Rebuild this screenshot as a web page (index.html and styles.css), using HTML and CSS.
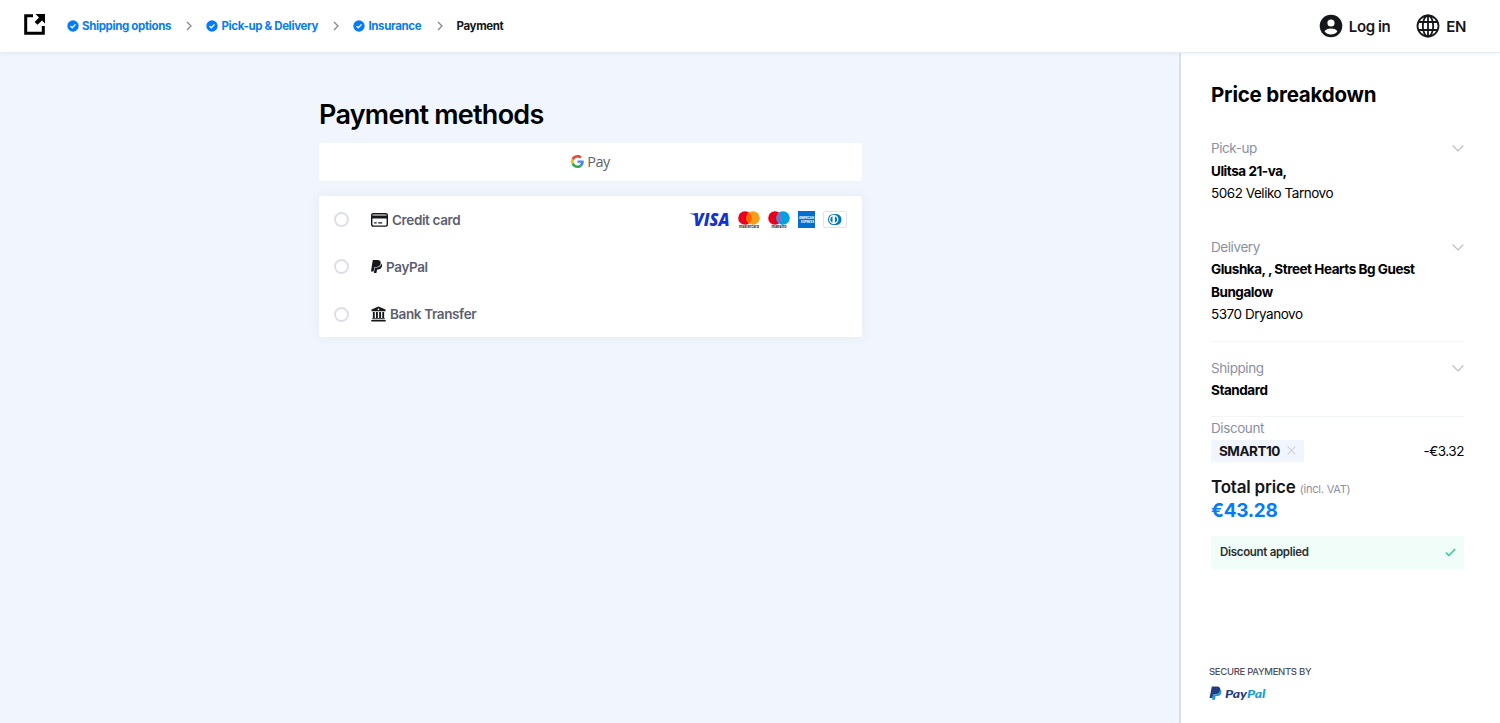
FILE: index.html
```html
<!DOCTYPE html>
<html lang="en">

<head>
    <meta charset="UTF-8" />
    <meta name="viewport" content="width=device-width, initial-scale=1.0" />
    <title>Payment</title>
    <link rel="stylesheet" href="styles.css">
</head>

<body>
    <!-- shared icons -->
    <svg class="sprite" width="0" height="0">
        <symbol id="done" viewBox="0 0 12 12">
            <circle cx="6" cy="6" r="5.7" fill="#057cf6" />
            <path d="M3.5 6.1l1.8 1.7 3.2-3.4" fill="none" stroke="#fff" stroke-width="1.3" />
        </symbol>
        <symbol id="next" viewBox="0 0 6 10">
            <path d="M1 1l4 4-4 4" fill="none" stroke="#858994" stroke-width="1.3" />
        </symbol>
        <symbol id="down" viewBox="0 0 12 8">
            <path d="M.7 1.500L6 7 11.300 1.500" fill="none" stroke="#b9bcc8" stroke-width="1.1" />
        </symbol>
        <symbol id="pp" viewBox="0 0 384 512">
            <path d="M111.400 295.900c-3.500 19.200-17.400 108.700-21.500 134-.3 1.800-1 2.500-3 2.500H12.300c-7.600 0-13.100-6.600-12.100-13.900L58.800 46.600c1.500-9.600 10.100-16.900 20-16.900 152.300 0 165.100-3.700 204 11.400 60.100 23.300 65.600 79.500 44 140.300-21.500 62.600-72.500 89.500-140.100 90.300-43.400.7-69.500-7-75.300 24.200zM357.100 152c-1.800-1.300-2.500-1.800-3 1.300-2 11.400-5.100 22.500-8.800 33.600-39.900 113.800-150.500 103.900-204.500 103.900-6.100 0-10.100 3.300-10.900 9.400-22.600 140.400-27.100 169.700-27.100 169.700-1 7.100 3.500 12.900 10.600 12.900h63.500c8.600 0 15.700-6.300 17.400-14.900.7-5.400-1.100 6.100 14.400-91.300 4.600-22 14.300-19.700 29.300-19.700 71 0 126.400-28.800 142.900-112.300 6.500-34.800 4.600-71.400-23.800-92.600z" />
        </symbol>
    </svg>

    <header class="header">
        <svg class="logo" width="22" height="21" viewBox="0 0 22 21">
            <path d="M9 1.700H1.700v17.600h17.600V12" fill="none" stroke="#000" stroke-width="3" />
            <path d="M11.500 0H21v9.500l-3-3-4.500 4.300-2.900-2.900L15 3.500z" fill="#000" />
        </svg>
        <nav class="steps">
            <svg class="done" width="12" height="12"><use href="#done" /></svg>
            <a class="step">Shipping options</a>
            <svg class="next" width="6" height="10"><use href="#next" /></svg>
            <svg class="done" width="12" height="12"><use href="#done" /></svg>
            <a class="step">Pick-up &amp; Delivery</a>
            <svg class="next" width="6" height="10"><use href="#next" /></svg>
            <svg class="done" width="12" height="12"><use href="#done" /></svg>
            <a class="step">Insurance</a>
            <svg class="next" width="6" height="10"><use href="#next" /></svg>
            <a class="step active">Payment</a>
        </nav>
        <div class="user">
            <svg width="24" height="24" viewBox="0 0 24 24">
                <circle cx="12" cy="12" r="11.300" fill="#15171a" />
                <circle cx="12" cy="9" r="3.600" fill="#fff" />
                <path d="M5.600 17.600c1-2.200 3.500-3 6.400-3s5.400.8 6.400 3c-1.500 1.800-3.700 2.900-6.400 2.900s-4.900-1.100-6.400-2.900z" fill="#fff" />
            </svg>
            <span>Log in</span>
        </div>
        <div class="lang">
            <svg width="24" height="24" viewBox="0 0 24 24" fill="none" stroke="#15171a" stroke-width="1.800">
                <circle cx="12" cy="12" r="10.500" />
                <ellipse cx="12" cy="12" rx="5.200" ry="10.500" />
                <path d="M12 1.500v21M2.400 8h19.200M2.400 16h19.200" />
            </svg>
            <span>EN</span>
        </div>
    </header>

    <div class="page">
        <main class="main">
            <h1>Payment methods</h1>
            <button class="gpay">
                <svg width="13" height="13" viewBox="0 0 48 48">
                    <path fill="#ea4335" d="M24 9.500c3.540 0 6.710 1.220 9.210 3.600l6.850-6.850C35.900 2.380 30.470 0 24 0 14.620 0 6.510 5.380 2.560 13.220l7.980 6.190C12.430 13.720 17.740 9.500 24 9.500z" />
                    <path fill="#4285f4" d="M46.980 24.550c0-1.570-.15-3.090-.38-4.550H24v9.020h12.940c-.58 2.960-2.260 5.480-4.780 7.180l7.730 6c4.510-4.180 7.090-10.360 7.090-17.650z" />
                    <path fill="#fbbc05" d="M10.530 28.590c-.48-1.450-.76-2.990-.76-4.590s.27-3.140.76-4.590l-7.980-6.190C.92 16.460 0 20.120 0 24s.92 7.540 2.560 10.780z" />
                    <path fill="#34a853" d="M24 48c6.480 0 11.930-2.130 15.890-5.810l-7.730-6c-2.150 1.450-4.920 2.300-8.160 2.300-6.260 0-11.570-4.220-13.470-9.910l-7.980 6.190C6.510 42.620 14.620 48 24 48z" />
                </svg>
                <span>Pay</span>
            </button>

            <div class="methods">
                <label class="method">
                    <input type="radio" name="method" />
                    <svg width="17" height="14" viewBox="0 0 17 14">
                        <rect x=".7" y=".7" width="15.600" height="12.400" rx="1.500" fill="none" stroke="#15171a" stroke-width="1.400" />
                        <path d="M1 2.500h15v3H1z" fill="#15171a" />
                        <path d="M3.200 9.800h2.500M7.200 9.800h4" stroke="#15171a" stroke-width="1.200" />
                    </svg>
                    <span>Credit card</span>
                    <div class="cards">
                        <svg width="41" height="18" viewBox="0 0 41 18">
                            <path d="M.5 2.500h6l2.500 4.500C7 4.700 4 3.300.5 2.700z" fill="#1434cb" />
                            <text class="visa" x="4.500" y="15" textLength="36" lengthAdjust="spacingAndGlyphs">VISA</text>
                        </svg>
                        <svg width="22" height="18" viewBox="0 0 22 18">
                            <circle cx="7" cy="7" r="6.800" fill="#e8001c" />
                            <circle cx="15" cy="7" r="6.800" fill="#f79e1b" />
                            <path d="M11 1.500a6.800 6.800 0 0 1 0 11 6.800 6.800 0 0 1 0-11z" fill="#ff5f00" />
                            <text class="brand" x="1" y="17" textLength="20" lengthAdjust="spacingAndGlyphs">mastercard</text>
                        </svg>
                        <svg width="22" height="18" viewBox="0 0 22 18">
                            <circle cx="7" cy="7" r="6.800" fill="#e8001c" />
                            <circle cx="15" cy="7" r="6.800" fill="#00a1e4" />
                            <path d="M11 1.500a6.800 6.800 0 0 1 0 11 6.800 6.800 0 0 1 0-11z" fill="#7673c0" />
                            <text class="brand" x="3.500" y="17" textLength="15" lengthAdjust="spacingAndGlyphs">maestro</text>
                        </svg>
                        <svg width="17" height="17" viewBox="0 0 17 17">
                            <path d="M0 0h17v17H0z" fill="#016fd0" />
                            <text class="amex" x="1" y="8" textLength="15" lengthAdjust="spacingAndGlyphs">AMERICAN</text>
                            <text class="amex" x="3" y="12" textLength="13" lengthAdjust="spacingAndGlyphs">EXPRESS</text>
                        </svg>
                        <svg width="24" height="17" viewBox="0 0 24 17">
                            <rect x=".5" y=".5" width="23" height="16" rx="1.500" fill="#fff" stroke="#e2e4e9" />
                            <path d="M10.500 3h2.500a5.500 5.500 0 0 1 0 11h-2.500a5.500 5.500 0 0 1 0-11z" fill="#0079be" />
                            <circle cx="10.700" cy="8.500" r="4.700" fill="#fff" />
                            <path d="M9.500 5.300a3.400 3.400 0 0 0 0 6.400zM11.900 5.300a3.400 3.400 0 0 1 0 6.400z" fill="#0079be" />
                        </svg>
                    </div>
                </label>
                <label class="method">
                    <input type="radio" name="method" />
                    <svg width="11" height="15" viewBox="0 0 11 15" fill="#15171a"><use href="#pp" /></svg>
                    <span>PayPal</span>
                </label>
                <label class="method">
                    <input type="radio" name="method" />
                    <svg width="15" height="16" viewBox="0 0 16 16" preserveAspectRatio="none" fill="#15171a">
                        <path d="M8 .5L.5 3.600v1.600h15V3.600zM2 6h2v6H2zM5.300 6h2v6h-2zM8.700 6h2v6h-2zM12 6h2v6h-2zM1.300 12.300h13.400v1H1.300zM.3 14h15.400v1.500H.3z" />
                        <circle cx="8" cy="3.300" r=".9" fill="#fff" />
                    </svg>
                    <span>Bank Transfer</span>
                </label>
            </div>
        </main>

        <aside class="side">
            <h2>Price breakdown</h2>
            <div class="block pickup">
                <div class="label">Pick-up <svg width="12" height="8"><use href="#down" /></svg></div>
                <b>Ulitsa 21-va,</b>
                <p>5062 Veliko Tarnovo</p>
            </div>
            <div class="block delivery">
                <div class="label">Delivery <svg width="12" height="8"><use href="#down" /></svg></div>
                <b>Glushka, , Street Hearts Bg Guest Bungalow</b>
                <p>5370 Dryanovo</p>
            </div>
            <div class="block shipping">
                <div class="label">Shipping <svg width="12" height="8"><use href="#down" /></svg></div>
                <b>Standard</b>
            </div>
            <div class="label">Discount</div>
            <div class="discount">
                <span class="code">SMART10
                    <svg width="9" height="9" viewBox="0 0 9 9"><path d="M.7.7l7.600 7.600M8.300.7L.7 8.300" stroke="#cdd0da" stroke-width="1.100" /></svg>
                </span>
                <span class="minus">-€3.32</span>
            </div>
            <div class="total">Total price <small>(incl. VAT)</small></div>
            <div class="price">€43.28</div>
            <div class="applied">
                <span>Discount applied</span>
                <svg width="11" height="9" viewBox="0 0 11 9"><path d="M.8 4.600l3 3L10.200 1" fill="none" stroke="#25cf8c" stroke-width="1.400" /></svg>
            </div>
            <div class="secure">
                <p>SECURE PAYMENTS BY</p>
                <svg width="58" height="18" viewBox="0 0 58 18">
                    <path d="M2.800 1.500h5c3 0 4 1.800 3.300 4.200-.7 2.600-2.500 3.700-5 3.700H4.300L3.400 13H.5z" fill="#253b80" />
                    <path d="M11.300 4.500c1.200.8 1.300 2 .9 3.400-.7 2.300-2.400 3.200-4.600 3.200H6.600L6 14.700H3l.9-5.200h2.400c2.700 0 4.300-1.500 5-5z" fill="#179bd7" />
                    <text class="paypal" x="16" y="12.500" textLength="40.500" lengthAdjust="spacingAndGlyphs">Pay<tspan fill="#179bd7">Pal</tspan></text>
                </svg>
            </div>
        </aside>
    </div>
</body>

</html>
```
FILE: styles.css
```css
* {
    margin: 0;
    padding: 0;
    box-sizing: border-box;
}

body {
    height: 723px;
    display: flex;
    flex-direction: column;
    overflow: hidden;
    font-family: Inter, "Liberation Sans", sans-serif;
    font-size: 13.5px;
    color: #000;
    background: #fff;
}

svg {
    display: block;
    flex: none;
    overflow: visible;
}

.sprite {
    position: absolute;
}

.header {
    height: 53px;
    flex: none;
    display: flex;
    align-items: center;
    padding: 0 33px 0 24px;
    background: #fff;
    border-bottom: 1px solid #e8ecf3;
    box-shadow: 0 1px 3px rgba(60, 80, 130, 0.08);
    z-index: 1;
}

.logo {
    margin: -4px 21px 0 0;
}

.steps {
    display: flex;
    align-items: center;
    flex: 1;
}

.step {
    font-size: 11.5px;
    font-weight: 700;
    letter-spacing: -0.36px;
    color: #057cf6;
    white-space: nowrap;
}

.step.active {
    color: #15171a;
}

.done {
    margin-right: 3px;
}

.next {
    margin: 0 14px 0 15.4px;
}

.user,
.lang {
    display: flex;
    align-items: center;
    gap: 7px;
    font-size: 15px;
    font-weight: 600;
    letter-spacing: -0.4px;
    color: #15171a;
}

.user {
    gap: 6px;
}

.lang {
    margin-left: 26px;
    gap: 6px;
    padding-right: 1px;
}

.page {
    flex: 1;
    display: flex;
}

.main {
    flex: 1;
    padding: 45px 317px 0 319px;
    background: #f1f5fd;
}

h1 {
    height: 45px;
    line-height: 34px;
    font-size: 27px;
    font-weight: 600;
    letter-spacing: -0.75px;
}

.gpay {
    width: 100%;
    height: 38px;
    display: flex;
    align-items: center;
    justify-content: center;
    gap: 3px;
    padding-bottom: 2px;
    border: none;
    border-radius: 3px;
    background: #fff;
    color: #5f6368;
    font-family: "Open Sans", sans-serif;
    font-size: 14.5px;
    letter-spacing: -0.5px;
    cursor: pointer;
}

.methods {
    height: 141px;
    margin-top: 15px;
    border-radius: 3px;
    background: #fff;
    box-shadow: 0 0 12px rgba(60, 80, 130, 0.07);
}

.method {
    height: 47.3px;
    display: flex;
    align-items: center;
    gap: 4px;
    padding: 0 15px;
    font-weight: 600;
    letter-spacing: -0.37px;
    color: #5b5f70;
}

.method input {
    width: 15px;
    height: 15px;
    margin-right: 18px;
    appearance: none;
    border: 2px solid #dcdfe8;
    border-radius: 50%;
}

.cards {
    display: flex;
    align-items: center;
    gap: 8px;
    margin-left: auto;
    letter-spacing: 0;
}

.visa {
    font: italic 800 17px "Open Sans", sans-serif;
    fill: #1434cb;
}

.brand {
    font: 700 4px Inter, sans-serif;
    fill: #222;
}

.amex {
    font: 700 3.6px Inter, sans-serif;
    fill: #fff;
}

.side {
    width: 321px;
    display: flex;
    flex-direction: column;
    padding: 29px 36px 0 30px;
    border-left: 2px solid #d8dfec;
    line-height: 22.5px;
    letter-spacing: -0.47px;
}

h2 {
    height: 55px;
    line-height: 26px;
    font-size: 20.5px;
    font-weight: 700;
    letter-spacing: -0.2px;
}

b {
    font-weight: 700;
    letter-spacing: -0.46px;
}

.label {
    display: flex;
    align-items: center;
    justify-content: space-between;
    letter-spacing: -0.42px;
    color: #8b90a4;
}

.pickup {
    margin-bottom: 31px;
}

.delivery {
    padding-bottom: 15px;
    border-bottom: 1px solid #f3f4f7;
}

.shipping {
    padding: 15px 0 14px;
    border-bottom: 1px solid #f3f4f7;
}

.discount {
    display: flex;
    justify-content: space-between;
    margin-top: 0.5px;
}

.code {
    width: 93px;
    display: flex;
    align-items: center;
    justify-content: space-between;
    padding: 0 8px;
    font-weight: 700;
    background: #f1f5fd;
    color: #15171a;
}

.total {
    margin-top: 14px;
    font-size: 17px;
    line-height: 22px;
    font-weight: 600;
    letter-spacing: -0.2px;
    color: #15171a;
}

.total small {
    font-size: 11px;
    font-weight: 400;
    color: #8b90a4;
}

.price {
    font-size: 19px;
    line-height: 21px;
    font-weight: 700;
    letter-spacing: -0.3px;
    color: #057cf6;
}

.applied {
    height: 33px;
    display: flex;
    align-items: center;
    justify-content: space-between;
    margin-top: 15px;
    padding: 0 8px 0 9px;
    border-radius: 2px;
    background: #f0fdf8;
    font-size: 11.5px;
    font-weight: 600;
    letter-spacing: -0.3px;
    color: #2b2f33;
}

.secure {
    margin: auto 0 20px -2px;
}

.secure p {
    margin-bottom: 2px;
    font-size: 9.5px;
    font-weight: 500;
    letter-spacing: -0.3px;
    color: #4c5063;
}

.paypal {
    font: italic 900 11.5px Lato, sans-serif;
    letter-spacing: 0;
    fill: #253b80;
}
```
